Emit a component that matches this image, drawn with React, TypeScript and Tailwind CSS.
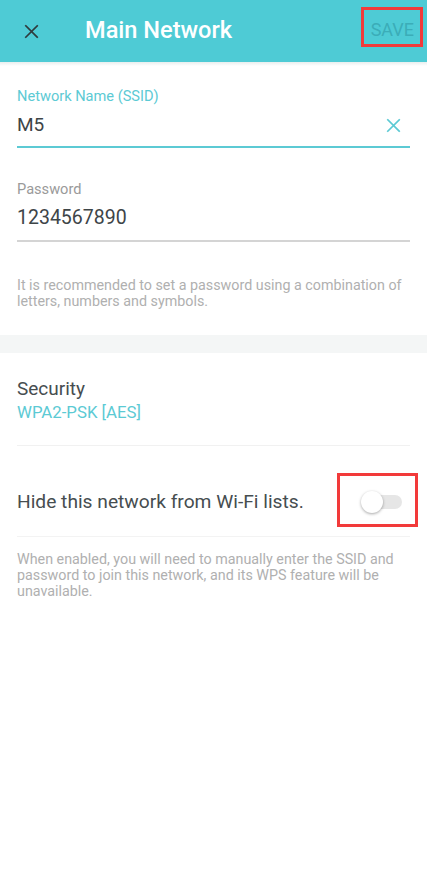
import React from 'react';

function CloseIcon({ className }: { className?: string }) {
  return (
    <svg viewBox="0 0 24 24" className={className} fill="none" stroke="currentColor" strokeWidth={2.4} strokeLinecap="square">
      <path d="M4 4 L20 20 M20 4 L4 20" />
    </svg>
  );
}

export default function App() {
  return (
    <div className="relative w-[427px] min-h-[895px] bg-white font-['Roboto',sans-serif]">
      <header className="flex h-[62px] items-center bg-[#4ecbd5]">
        <CloseIcon className="ml-[23px] h-[17px] w-[17px] text-[#2f3b3d]" />
        <h1 className="ml-[45px] text-[23.6px] font-medium text-white">Main Network</h1>
        <button className="ml-auto mr-[13px] mb-[3px] text-[18px] text-[#3badb8]">SAVE</button>
      </header>
      <div className="h-[4px] bg-gradient-to-b from-[#e9eeee] to-white" />

      <section className="px-[17px] pt-[20px] pb-[26px]">
        <p className="text-[14.6px] leading-[20px] text-[#5ccad4]">Network Name (SSID)</p>
        <div className="mt-[7px] flex items-center border-b-2 border-[#5ccad4] pb-[9px]">
          <span className="flex-1 text-[19px] leading-[24px] text-[#3e4548]">M5</span>
          <CloseIcon className="mr-[8px] h-[17px] w-[17px] text-[#5ccad4]" />
        </div>

        <p className="mt-[31px] text-[14.6px] leading-[20px] text-[#9a9a9a]">Password</p>
        <div className="mt-[7px] border-b-2 border-[#d4d4d4] pb-[9px]">
          <span className="text-[19.5px] leading-[24px] text-[#3e4548]">1234567890</span>
        </div>

        <p className="mt-[35px] text-[14.3px] leading-[16px] text-[#b0b0b0]">
          It is recommended to set a password using a combination of letters, numbers and symbols.
        </p>
      </section>

      <div className="h-[18px] bg-[#f4f6f6]" />

      <section className="px-[17px]">
        <div className="border-b border-[#f1f1f1] pt-[24px] pb-[22px]">
          <p className="text-[19px] leading-[24px] text-[#464d50]">Security</p>
          <p className="text-[16.8px] leading-[22px] text-[#5ccad4]">WPA2-PSK [AES]</p>
        </div>

        <div className="flex items-center border-b border-[#f3f3f3] pt-[44px] pb-[22px]">
          <p className="flex-1 text-[19.2px] leading-[24px] text-[#464d50]">Hide this network from Wi-Fi lists.</p>
          <div className="relative mr-[7px] h-[22px] w-[42px]">
            <div className="absolute left-[4px] top-[4px] h-[14px] w-[37px] rounded-full bg-[#e6e6e6]" />
            <div className="absolute left-0 top-0 h-[22px] w-[22px] rounded-full bg-white shadow-[0_1px_3px_rgba(0,0,0,0.35)]" />
          </div>
        </div>

        <p className="mt-[14px] text-[14.3px] leading-[16px] text-[#b0b0b0]">
          When enabled, you will need to manually enter the SSID and password to join this network, and its WPS feature will be unavailable.
        </p>
      </section>

      <div className="pointer-events-none absolute left-[361px] top-[7px] h-[40px] w-[62px] border-[3px] border-[#f23a3a]" />
      <div className="pointer-events-none absolute left-[337px] top-[473px] h-[54px] w-[81px] border-[3px] border-[#f23a3a]" />
    </div>
  );
}
